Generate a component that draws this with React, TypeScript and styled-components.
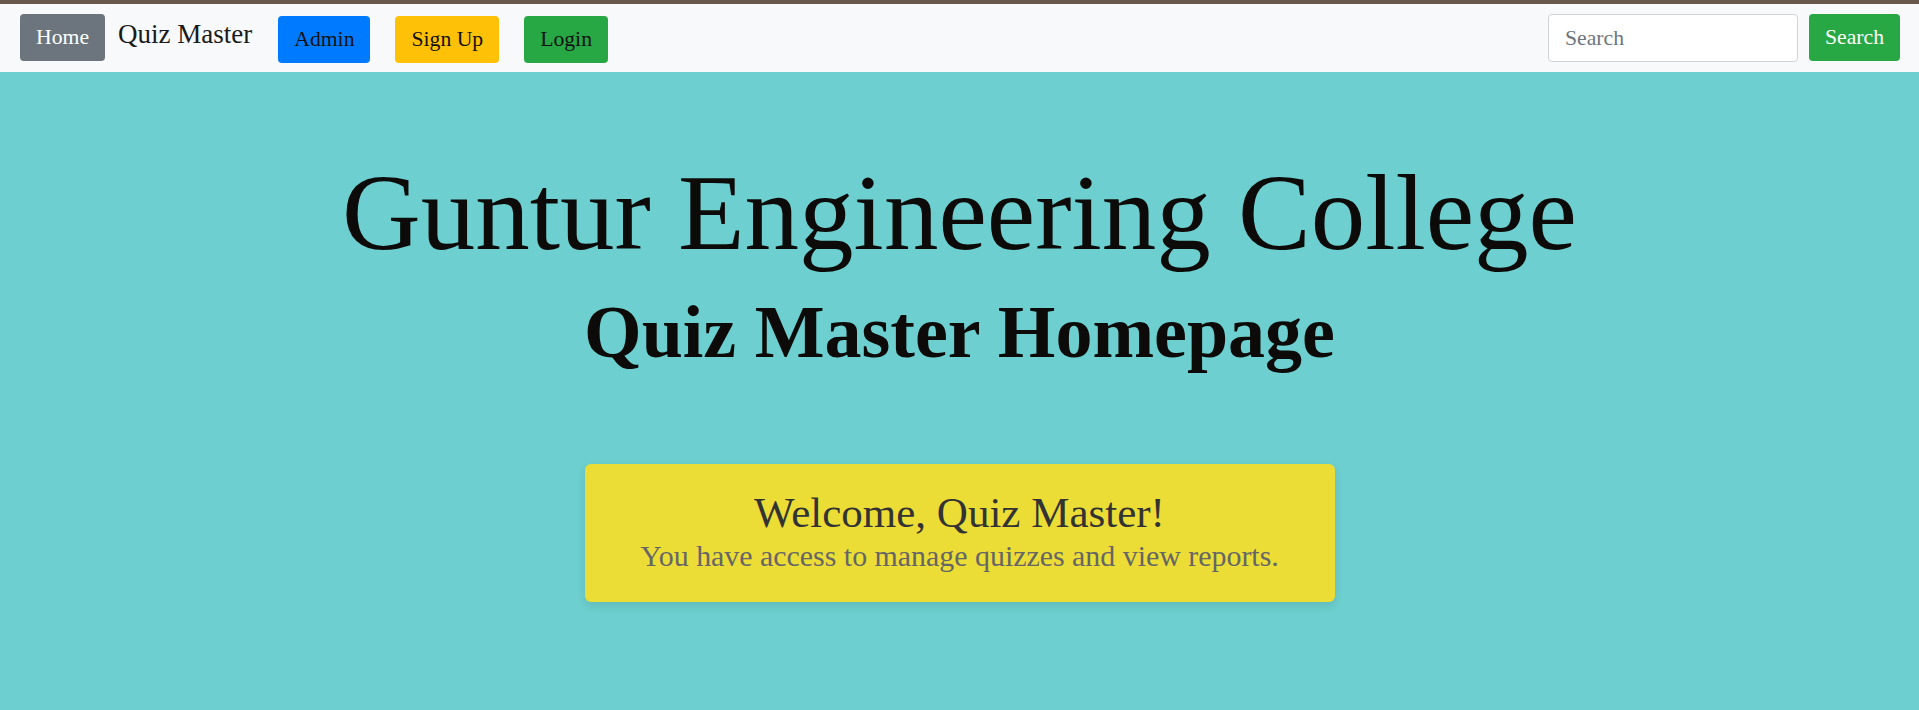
import React from "react";
import styled, { createGlobalStyle } from "styled-components";

const GlobalStyle = createGlobalStyle`
  html, body {
    margin: 0;
    padding: 0;
    background: #6dcfcf;
    font-family: "Liberation Serif", "Times New Roman", serif;
  }
  * { box-sizing: border-box; }
`;

const Page = styled.div`
  min-height: 710px;
  display: flex;
  flex-direction: column;
  background: #6dcfcf;
`;

const NavBar = styled.nav`
  display: flex;
  align-items: flex-start;
  height: 72px;
  border-top: 4px solid #6a594a;
  background: #f8f9fa;
  padding: 10px 19px 0 20px;
`;

const NavButton = styled.button<{ $bg: string; $fg: string; $offset?: number; $gap?: number }>`
  height: 47px;
  margin-top: ${(p) => p.$offset ?? 0}px;
  margin-left: ${(p) => p.$gap ?? 0}px;
  padding: 0 16px;
  border: none;
  border-radius: 4px;
  background: ${(p) => p.$bg};
  color: ${(p) => p.$fg};
  font-family: "Liberation Serif", "Times New Roman", serif;
  font-size: 21.7px;
  line-height: 47px;
  cursor: pointer;
  white-space: nowrap;
`;

const Brand = styled.a`
  margin-left: 13px;
  margin-top: 0px;
  font-size: 27px;
  line-height: 40px;
  color: #1a1a1a;
  text-decoration: none;
  white-space: nowrap;
`;

const SearchForm = styled.form`
  display: flex;
  align-items: flex-start;
  gap: 11px;
  margin-left: auto;
`;

const SearchInput = styled.input`
  width: 250px;
  height: 48px;
  padding: 0 16px;
  border: 1px solid #ced4da;
  border-radius: 4px;
  background: #fff;
  font-family: "Liberation Serif", "Times New Roman", serif;
  font-size: 21.7px;
  color: #495057;
  outline: none;
  &::placeholder { color: #6c757d; }
`;

const Main = styled.main`
  flex: 1;
  display: flex;
  flex-direction: column;
  align-items: center;
  padding-top: 76px;
`;

const Title = styled.h1`
  margin: 0;
  font-size: 109px;
  font-weight: 400;
  line-height: 1.2;
  color: #0c0b09;
  white-space: nowrap;
`;

const Subtitle = styled.h2`
  margin: 9px 0 0;
  font-size: 74px;
  font-weight: 700;
  line-height: 1.2;
  color: #0c0b09;
  white-space: nowrap;
`;

const WelcomeCard = styled.section`
  width: 750px;
  margin-top: 87px;
  padding: 23px 0 28px;
  border-radius: 6px;
  background: #ecdd36;
  box-shadow: 0 4px 10px rgba(0, 0, 0, 0.1);
  text-align: center;
`;

const WelcomeHeading = styled.h3`
  margin: 0;
  font-size: 43px;
  font-weight: 400;
  line-height: 1.2;
  color: #333;
`;

const WelcomeText = styled.p`
  margin: 0;
  font-size: 29.9px;
  line-height: 1.2;
  color: #666;
`;

export default function App() {
  return (
    <>
      <GlobalStyle />
      <Page>
        <NavBar>
          <NavButton $bg="#6c757d" $fg="#ffffff">Home</NavButton>
          <Brand href="#">Quiz Master</Brand>
          <NavButton $bg="#007bff" $fg="#111" $offset={2} $gap={26}>Admin</NavButton>
          <NavButton $bg="#ffc107" $fg="#111" $offset={2} $gap={25}>Sign Up</NavButton>
          <NavButton $bg="#28a745" $fg="#111" $offset={2} $gap={25}>Login</NavButton>
          <SearchForm onSubmit={(e) => e.preventDefault()}>
            <SearchInput type="search" placeholder="Search" />
            <NavButton $bg="#28a745" $fg="#ffffff" type="submit">Search</NavButton>
          </SearchForm>
        </NavBar>
        <Main>
          <Title>Guntur Engineering College</Title>
          <Subtitle>Quiz Master Homepage</Subtitle>
          <WelcomeCard>
            <WelcomeHeading>Welcome, Quiz Master!</WelcomeHeading>
            <WelcomeText>You have access to manage quizzes and view reports.</WelcomeText>
          </WelcomeCard>
        </Main>
      </Page>
    </>
  );
}
